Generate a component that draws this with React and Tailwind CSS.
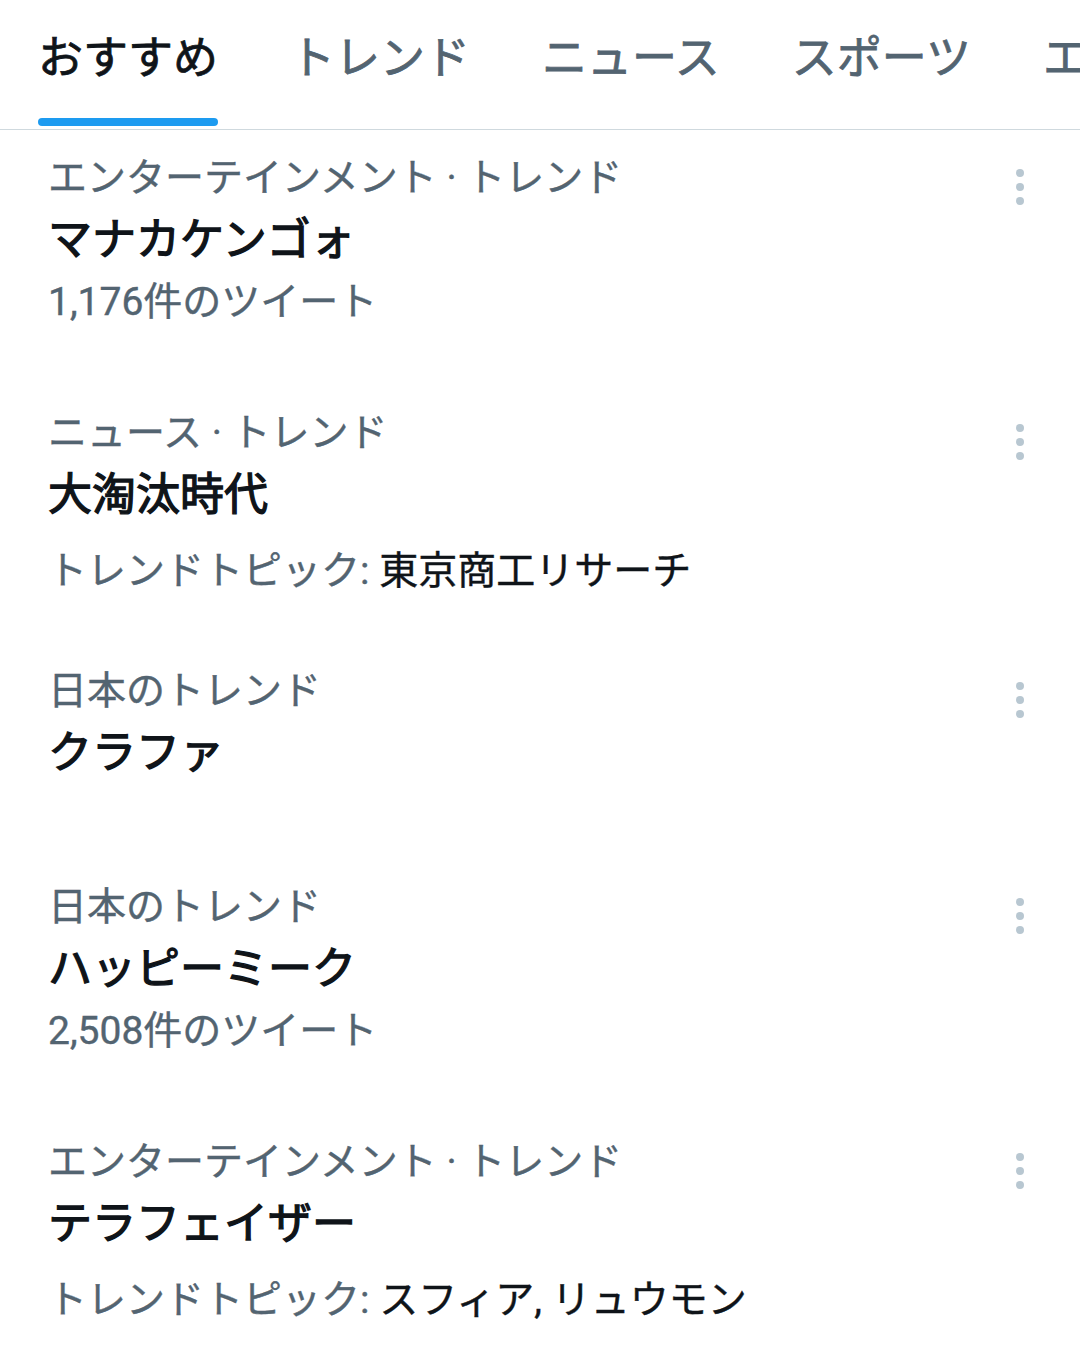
const tabs = ['おすすめ', 'トレンド', 'ニュース', 'スポーツ', 'エンターテインメント']

const trends = [
  { category: 'エンターテインメント · トレンド', title: 'マナカケンゴォ', count: '1,176件のツイート' },
  { category: 'ニュース · トレンド', title: '大淘汰時代', topic: '東京商工リサーチ' },
  { category: '日本のトレンド', title: 'クラファ' },
  { category: '日本のトレンド', title: 'ハッピーミーク', count: '2,508件のツイート' },
  { category: 'エンターテインメント · トレンド', title: 'テラフェイザー', topic: 'スフィア, リュウモン' },
]

function Kebab() {
  return (
    <button className="flex flex-col items-center gap-[6px] w-[40px]">
      <span className="w-[8px] h-[8px] rounded-full bg-[#b8c7d1]" />
      <span className="w-[8px] h-[8px] rounded-full bg-[#b8c7d1]" />
      <span className="w-[8px] h-[8px] rounded-full bg-[#b8c7d1]" />
    </button>
  )
}

function TrendRow({ trend }) {
  // rows without a third line end earlier than the others
  let pad = 'pb-[75px]'
  if (trend.count) pad = 'pb-[52px]'
  if (trend.topic) pad = 'pb-[41px]'

  return (
    <div className={`flex items-start pl-[48px] pr-[40px] pt-[17px] ${pad}`}>
      <div className="flex-1 min-w-0">
        <p className="text-[39px] leading-[62px] text-[#536471] whitespace-nowrap [-webkit-text-stroke:0.4px]">
          {trend.category}
        </p>
        <p className="text-[44px] leading-[62px] text-[#0f1419] whitespace-nowrap [-webkit-text-stroke:1.3px]">
          {trend.title}
        </p>
        {trend.count && (
          <p className="text-[39px] leading-[62px] text-[#536471] whitespace-nowrap [-webkit-text-stroke:0.4px]">
            {trend.count}
          </p>
        )}
        {trend.topic && (
          <p className="mt-[14px] text-[39px] leading-[62px] text-[#536471] whitespace-nowrap [-webkit-text-stroke:0.4px]">
            トレンドトピック: <span className="text-[#0f1419]">{trend.topic}</span>
          </p>
        )}
      </div>
      <div className="pt-[22px]">
        <Kebab />
      </div>
    </div>
  )
}

export default function App() {
  return (
    <div
      className="w-[1080px] h-[1355px] overflow-hidden bg-white"
      style={{ fontFamily: "Roboto, 'Noto Sans CJK JP', sans-serif" }}
    >
      {/* Tabs */}
      <div className="flex h-[130px] pl-[2px] border-b border-[#cfd9de] overflow-hidden">
        {tabs.map((tab, i) => (
          <div key={tab} className="shrink-0 px-[36px] pt-[28px]">
            <div className="flex flex-col">
              <span
                className={`text-[45px] leading-[62px] whitespace-nowrap [-webkit-text-stroke:0.8px] ${i === 0 ? 'text-[#0f1419]' : 'text-[#536471]'}`}
              >
                {tab}
              </span>
              {i === 0 && <span className="mt-[28px] h-[8px] rounded-full bg-[#1d9bf0]" />}
            </div>
          </div>
        ))}
      </div>

      {/* Trends */}
      <div>
        {trends.map((t, i) => (
          <TrendRow key={i} trend={t} />
        ))}
      </div>
    </div>
  )
}
